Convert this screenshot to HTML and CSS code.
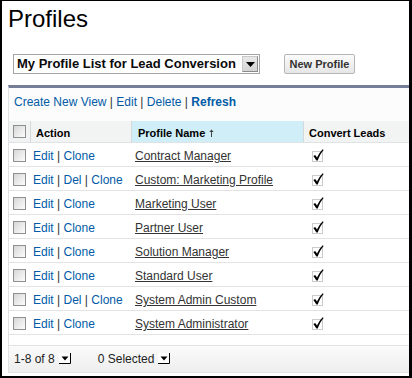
FILE: index.html
```
<!DOCTYPE html>
<html>
<head>
<meta charset="utf-8">
<link rel="stylesheet" href="styles.css">
</head>
<body>
<div class="frame">
  <h1 class="title">Profiles</h1>
  <div class="toolbar">
    <div class="select">
      <span class="select-text">My Profile List for Lead Conversion</span>
      <span class="select-btn"><svg width="9" height="5" viewBox="0 0 9 5"><path d="M0 0H9L4.5 5Z" fill="#000"/></svg></span>
    </div>
    <button class="btn">New Profile</button>
  </div>
  <div class="panel">
    <div class="links"><a class="lnk">Create New View</a> <span class="sep">|</span> <a class="lnk">Edit</a> <span class="sep">|</span> <a class="lnk">Delete</a> <span class="sep">|</span> <a class="lnk strong">Refresh</a></div>
    <table class="list">
      <thead>
        <tr class="head">
          <th class="c-cb"><span class="cb"></span></th>
          <th class="c-act">Action</th>
          <th class="c-name sorted">Profile Name <svg class="arrow" width="5" height="8" viewBox="0 0 5 8"><path d="M2.5 0.5L0.3 3H2V8H3V3H4.7Z" fill="#444"/></svg></th>
          <th class="c-conv">Convert Leads</th>
        </tr>
      </thead>
      <tbody>
        <tr><td class="c-cb"><span class="cb"></span></td><td class="c-act"><a class="lnk">Edit</a> <span class="sep">|</span> <a class="lnk">Clone</a></td><td class="c-name"><a class="name">Contract Manager</a></td><td class="c-conv"><svg class="chk" width="13" height="14" viewBox="0 0 13 14"><rect x="1.5" y="3.5" width="10" height="10" fill="none" stroke="#999" stroke-dasharray="1 1"/><path d="M2.4 8L4.2 7L6 9.6C7.6 6.2 9.4 3.4 11.8 1.2L12.6 2C10.3 4.6 8.3 8.2 6.7 12.6L5.4 12.6Z" fill="#000"/></svg></td></tr>
        <tr><td class="c-cb"><span class="cb"></span></td><td class="c-act"><a class="lnk">Edit</a> <span class="sep">|</span> <a class="lnk">Del</a> <span class="sep">|</span> <a class="lnk">Clone</a></td><td class="c-name"><a class="name">Custom: Marketing Profile</a></td><td class="c-conv"><svg class="chk" width="13" height="14" viewBox="0 0 13 14"><rect x="1.5" y="3.5" width="10" height="10" fill="none" stroke="#999" stroke-dasharray="1 1"/><path d="M2.4 8L4.2 7L6 9.6C7.6 6.2 9.4 3.4 11.8 1.2L12.6 2C10.3 4.6 8.3 8.2 6.7 12.6L5.4 12.6Z" fill="#000"/></svg></td></tr>
        <tr><td class="c-cb"><span class="cb"></span></td><td class="c-act"><a class="lnk">Edit</a> <span class="sep">|</span> <a class="lnk">Clone</a></td><td class="c-name"><a class="name">Marketing User</a></td><td class="c-conv"><svg class="chk" width="13" height="14" viewBox="0 0 13 14"><rect x="1.5" y="3.5" width="10" height="10" fill="none" stroke="#999" stroke-dasharray="1 1"/><path d="M2.4 8L4.2 7L6 9.6C7.6 6.2 9.4 3.4 11.8 1.2L12.6 2C10.3 4.6 8.3 8.2 6.7 12.6L5.4 12.6Z" fill="#000"/></svg></td></tr>
        <tr><td class="c-cb"><span class="cb"></span></td><td class="c-act"><a class="lnk">Edit</a> <span class="sep">|</span> <a class="lnk">Clone</a></td><td class="c-name"><a class="name">Partner User</a></td><td class="c-conv"><svg class="chk" width="13" height="14" viewBox="0 0 13 14"><rect x="1.5" y="3.5" width="10" height="10" fill="none" stroke="#999" stroke-dasharray="1 1"/><path d="M2.4 8L4.2 7L6 9.6C7.6 6.2 9.4 3.4 11.8 1.2L12.6 2C10.3 4.6 8.3 8.2 6.7 12.6L5.4 12.6Z" fill="#000"/></svg></td></tr>
        <tr><td class="c-cb"><span class="cb"></span></td><td class="c-act"><a class="lnk">Edit</a> <span class="sep">|</span> <a class="lnk">Clone</a></td><td class="c-name"><a class="name">Solution Manager</a></td><td class="c-conv"><svg class="chk" width="13" height="14" viewBox="0 0 13 14"><rect x="1.5" y="3.5" width="10" height="10" fill="none" stroke="#999" stroke-dasharray="1 1"/><path d="M2.4 8L4.2 7L6 9.6C7.6 6.2 9.4 3.4 11.8 1.2L12.6 2C10.3 4.6 8.3 8.2 6.7 12.6L5.4 12.6Z" fill="#000"/></svg></td></tr>
        <tr><td class="c-cb"><span class="cb"></span></td><td class="c-act"><a class="lnk">Edit</a> <span class="sep">|</span> <a class="lnk">Clone</a></td><td class="c-name"><a class="name">Standard User</a></td><td class="c-conv"><svg class="chk" width="13" height="14" viewBox="0 0 13 14"><rect x="1.5" y="3.5" width="10" height="10" fill="none" stroke="#999" stroke-dasharray="1 1"/><path d="M2.4 8L4.2 7L6 9.6C7.6 6.2 9.4 3.4 11.8 1.2L12.6 2C10.3 4.6 8.3 8.2 6.7 12.6L5.4 12.6Z" fill="#000"/></svg></td></tr>
        <tr><td class="c-cb"><span class="cb"></span></td><td class="c-act"><a class="lnk">Edit</a> <span class="sep">|</span> <a class="lnk">Del</a> <span class="sep">|</span> <a class="lnk">Clone</a></td><td class="c-name"><a class="name">System Admin Custom</a></td><td class="c-conv"><svg class="chk" width="13" height="14" viewBox="0 0 13 14"><rect x="1.5" y="3.5" width="10" height="10" fill="none" stroke="#999" stroke-dasharray="1 1"/><path d="M2.4 8L4.2 7L6 9.6C7.6 6.2 9.4 3.4 11.8 1.2L12.6 2C10.3 4.6 8.3 8.2 6.7 12.6L5.4 12.6Z" fill="#000"/></svg></td></tr>
        <tr><td class="c-cb"><span class="cb"></span></td><td class="c-act"><a class="lnk">Edit</a> <span class="sep">|</span> <a class="lnk">Clone</a></td><td class="c-name"><a class="name">System Administrator</a></td><td class="c-conv"><svg class="chk" width="13" height="14" viewBox="0 0 13 14"><rect x="1.5" y="3.5" width="10" height="10" fill="none" stroke="#999" stroke-dasharray="1 1"/><path d="M2.4 8L4.2 7L6 9.6C7.6 6.2 9.4 3.4 11.8 1.2L12.6 2C10.3 4.6 8.3 8.2 6.7 12.6L5.4 12.6Z" fill="#000"/></svg></td></tr>
      </tbody>
    </table>
    <div class="spacer"></div>
    <div class="footer">
      <span class="fitem">1-8 of 8</span><span class="dd"><svg width="12" height="11" viewBox="0 0 12 11"><rect x="0" y="0" width="12" height="11" fill="#fff"/><path d="M11.5 0V10.5H0" fill="none" stroke="#000"/><path d="M2.5 3.5H9.5L6 7.5Z" fill="#000"/></svg></span>
      <span class="fitem sel">0 Selected</span><span class="dd"><svg width="12" height="11" viewBox="0 0 12 11"><rect x="0" y="0" width="12" height="11" fill="#fff"/><path d="M11.5 0V10.5H0" fill="none" stroke="#000"/><path d="M2.5 3.5H9.5L6 7.5Z" fill="#000"/></svg></span>
    </div>
  </div>
</div>
</body>
</html>
```

FILE: styles.css
```
* { box-sizing: border-box; }
html, body { margin: 0; padding: 0; background: #fff; }
body { font-family: "Liberation Sans", Arial, sans-serif; }

.frame {
  width: 412px;
  height: 378px;
  border-style: solid;
  border-color: #000;
  border-width: 1px 3px 2px 2px;
  overflow: hidden;
  background: #fff;
}

.title {
  margin: 4px 0 0 6px;
  font-size: 24px;
  line-height: 28px;
  font-weight: normal;
  color: #000;
}

.toolbar {
  display: flex;
  align-items: flex-start;
  margin: 21px 0 0 11px;
  height: 20px;
}

.select {
  width: 247px;
  height: 20px;
  border: 1px solid #a5a5a5;
  background: #fff;
  display: flex;
  align-items: center;
  justify-content: space-between;
  padding: 0 1px 0 3px;
}
.select-text {
  font-size: 13px;
  font-weight: bold;
  line-height: 18px;
  color: #0a0a0a;
  white-space: nowrap;
}
.select-btn {
  width: 16px;
  height: 16px;
  border: 1px solid #8a8a8a;
  border-top-color: #c8c8c8;
  border-left-color: #c8c8c8;
  background: linear-gradient(#e8e8e8, #d4d4d4);
  display: flex;
  align-items: center;
  justify-content: center;
}

.btn {
  margin-left: 24px;
  width: 71px;
  height: 20px;
  border: 1px solid #b5b5b5;
  border-radius: 2px;
  background: linear-gradient(#fbfbfb, #e6e6e6);
  font-family: "Liberation Sans", Arial, sans-serif;
  font-size: 11px;
  font-weight: bold;
  color: #333;
  padding: 0;
  line-height: 18px;
}

.panel {
  margin: 11px 0 0 6px;
  border-top: 3px solid #747e96;
  border-left: 1px solid #e0e3e5;
  background: #fff;
}

.links {
  height: 33px;
  padding: 7px 0 0 5px;
  font-size: 12px;
  line-height: 14px;
  background: #fcfcfc;
}
.lnk { color: #015ba7; text-decoration: none; }
.strong { font-weight: bold; }
.sep { color: #333; }

.list {
  width: 400px;
  border-collapse: separate;
  border-spacing: 0;
  table-layout: fixed;
}
.list th {
  height: 22px;
  padding: 3px 0 0 5px;
  font-size: 11px;
  line-height: 18px;
  font-weight: bold;
  color: #000;
  text-align: left;
  vertical-align: top;
  background: #f2f3f3;
  border-bottom: 1px solid #e0e3e5;
  border-left: 1px solid #d4dadc;
  white-space: nowrap;
}
.list th.c-cb { border-left: 0; padding: 4px 0 0 4px; line-height: 13px; }
.list th.sorted { background: #cfeef8; padding-left: 6px; }
.c-cb { width: 21px; }
.c-act { width: 101px; }
.c-name { width: 172px; }
.c-conv { width: 106px; }

.list td {
  height: 24px;
  padding: 3px 0 0 3px;
  font-size: 12px;
  line-height: 20px;
  vertical-align: top;
  border-bottom: 1px solid #e3e3e3;
  white-space: nowrap;
  color: #333;
}
.list td.c-cb { padding-left: 4px; }
.list td.c-name { padding-left: 4px; }
.list td.c-conv { padding-left: 8px; }

.cb {
  display: inline-block;
  width: 13px;
  height: 13px;
  border: 1px solid #8f8f8f;
  background: linear-gradient(135deg, #d6d6d6, #fdfdfd);
  vertical-align: -2px;
}
.list th .cb { vertical-align: top; }

.name { color: #333; text-decoration: underline; }
.chk { display: inline-block; vertical-align: -2px; }
.arrow { vertical-align: 0; margin-left: 1px; }

.spacer { height: 10px; background: #fff; }

.footer {
  height: 28px;
  padding: 5px 0 0 5px;
  border-top: 1px solid #e3e3e3;
  border-bottom: 1px solid #e3e3e3;
  background: linear-gradient(#fbfbfb, #eeeeee);
  font-size: 12px;
  line-height: 16px;
  color: #222;
  display: flex;
  align-items: flex-start;
}
.dd { margin-left: 4px; display: inline-flex; margin-top: 2px; }
.sel { margin-left: 27px; }
```
